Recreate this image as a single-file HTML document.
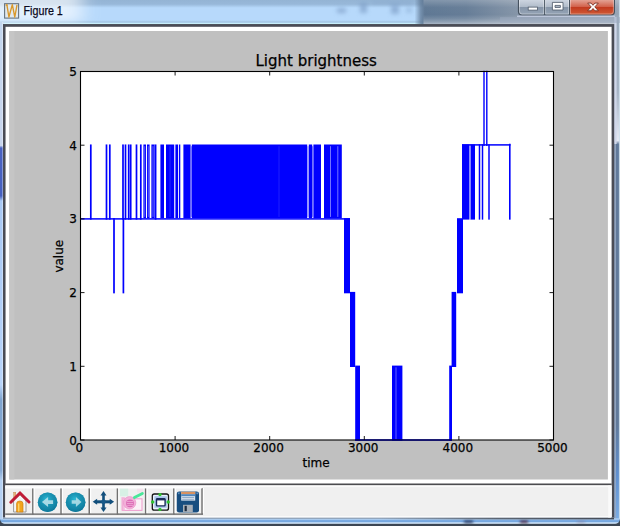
<!DOCTYPE html>
<html lang="en"><head><meta charset="utf-8"><title>Figure 1</title>
<style>
html,body{margin:0;padding:0;background:#b7d7fa;}
body{width:620px;height:526px;overflow:hidden;font-family:"Liberation Sans","DejaVu Sans",sans-serif;}
svg{display:block;}
</style></head><body>
<svg width="620" height="526" viewBox="0 0 620 526">

<defs>
 <linearGradient id="tbv" x1="0" y1="0" x2="0" y2="1">
  <stop offset="0" stop-color="#94b4d4"/><stop offset="0.17" stop-color="#98b8d9"/><stop offset="0.32" stop-color="#b7d9fb"/>
  <stop offset="0.83" stop-color="#b7d9fb"/><stop offset="0.865" stop-color="#a9cbe9"/><stop offset="0.915" stop-color="#a9cbe9"/><stop offset="0.945" stop-color="#c8f0fb"/><stop offset="1" stop-color="#c8eefb"/>
 </linearGradient>
 <linearGradient id="dkh" gradientUnits="userSpaceOnUse" x1="414.5" y1="0" x2="620" y2="0">
  <stop offset="0" stop-color="#5f7894" stop-opacity="0"/><stop offset="0.03" stop-color="#5f7894" stop-opacity="0.75"/>
  <stop offset="0.05" stop-color="#5f7894" stop-opacity="1"/><stop offset="0.25" stop-color="#667d97"/><stop offset="0.5" stop-color="#8595a8"/><stop offset="1" stop-color="#97a5b6"/>
 </linearGradient>
 <linearGradient id="dkv" x1="0" y1="0" x2="0" y2="1">
  <stop offset="0" stop-color="#ffffff" stop-opacity="0.22"/><stop offset="0.3" stop-color="#ffffff" stop-opacity="0.02"/>
  <stop offset="0.6" stop-color="#ffffff" stop-opacity="0.0"/><stop offset="0.75" stop-color="#ffffff" stop-opacity="0.12"/><stop offset="0.9" stop-color="#ffffff" stop-opacity="0.3"/><stop offset="1" stop-color="#ffffff" stop-opacity="0.5"/>
 </linearGradient>
 <linearGradient id="lb" x1="0" y1="0" x2="1" y2="0"><stop offset="0" stop-color="#7fa6d0"/><stop offset="0.4" stop-color="#b5d3f2"/><stop offset="1" stop-color="#d6e8fa"/></linearGradient>
 <linearGradient id="btn" x1="0" y1="0" x2="0" y2="1"><stop offset="0" stop-color="#cdd5e0"/><stop offset="0.45" stop-color="#b2bdcb"/><stop offset="0.5" stop-color="#8695a8"/><stop offset="1" stop-color="#95a4b6"/></linearGradient>
 <linearGradient id="cls" x1="0" y1="0" x2="0" y2="1"><stop offset="0" stop-color="#e3a193"/><stop offset="0.45" stop-color="#d2634d"/><stop offset="0.5" stop-color="#c23a1f"/><stop offset="1" stop-color="#cf5a36"/></linearGradient>
 <radialGradient id="glow" cx="0.5" cy="0.5" r="0.5"><stop offset="0" stop-color="#ffffff" stop-opacity="0.7"/><stop offset="0.6" stop-color="#ffffff" stop-opacity="0.4"/><stop offset="1" stop-color="#ffffff" stop-opacity="0"/></radialGradient>
 <linearGradient id="bdk" x1="0" y1="0" x2="1" y2="0"><stop offset="0" stop-color="#4e5560" stop-opacity="0"/><stop offset="0.5" stop-color="#4e5560" stop-opacity="0.8"/><stop offset="1" stop-color="#454b56"/></linearGradient>
 <filter id="bl3" x="-50%" y="-50%" width="200%" height="200%"><feGaussianBlur stdDeviation="2"/></filter>
 <filter id="bl8" x="-50%" y="-100%" width="200%" height="300%"><feGaussianBlur stdDeviation="9 4"/></filter>
 <filter id="bl1"><feGaussianBlur stdDeviation="1.6"/></filter>
 <filter id="bl2"><feGaussianBlur stdDeviation="0.5"/></filter>
</defs>
<!-- aero frame background -->
<rect x="0" y="0" width="620" height="526" fill="#b7d7fa"/>
<rect x="0" y="0" width="620" height="24.5" fill="url(#tbv)"/>
<!-- blurred blobs behind glass -->
<g filter="url(#bl3)" fill="#7696c0" opacity="0.6">
 <rect x="337" y="8" width="9" height="5"/><rect x="360" y="3" width="7" height="10"/><rect x="372" y="1" width="40" height="3" opacity="0.5"/>
 <rect x="391" y="5" width="8" height="9"/><rect x="406" y="7" width="6" height="6" opacity="0.6"/>
</g>
<!-- dark region on the right of titlebar -->
<rect x="414.5" y="0" width="205.5" height="24.5" fill="url(#dkh)"/>
<rect x="423.5" y="0" width="196.5" height="24.5" fill="url(#dkv)"/>
<!-- glow behind title text -->
<rect x="-30" y="-12" width="112" height="34" fill="#ffffff" opacity="0.62" filter="url(#bl8)"/>
<!-- left border -->
<defs>
 <linearGradient id="lbv" x1="0" y1="0" x2="0" y2="1">
  <stop offset="0" stop-color="#c3d6ee"/><stop offset="0.245" stop-color="#c9d6ee"/><stop offset="0.25" stop-color="#4a62c2"/><stop offset="0.345" stop-color="#4560c0"/>
  <stop offset="0.355" stop-color="#a8c8f4"/><stop offset="0.72" stop-color="#b8d4fa"/><stop offset="0.75" stop-color="#7fa4d0"/><stop offset="0.89" stop-color="#86a9d4"/><stop offset="0.91" stop-color="#b4d0f2"/><stop offset="1" stop-color="#b4d0f2"/>
 </linearGradient>
 <linearGradient id="rbv" x1="0" y1="0" x2="0" y2="1">
  <stop offset="0" stop-color="#9aaabb"/><stop offset="0.15" stop-color="#a6b4c6"/><stop offset="0.235" stop-color="#dfe4f0"/><stop offset="0.245" stop-color="#e4e9f4"/><stop offset="0.252" stop-color="#60799a"/>
  <stop offset="0.8" stop-color="#60799a"/><stop offset="0.9" stop-color="#5f8fcf"/><stop offset="1" stop-color="#7fb0e6"/>
 </linearGradient>
</defs>
<rect x="0" y="22" width="3.4" height="504" fill="url(#lbv)"/>
<rect x="2" y="22" width="1.2" height="504" fill="#ffffff" opacity="0.35"/>
<!-- right border -->
<rect x="614.1" y="15.5" width="5.9" height="510.5" fill="url(#rbv)"/>
<rect x="614.2" y="17" width="2.4" height="127" fill="#d0d7ea"/>
<rect x="614.2" y="144" width="1.8" height="376" fill="#98a9c2" opacity="0.85"/>
<rect x="618.9" y="0" width="1.1" height="526" fill="#cfe0ec" opacity="0.9"/>
<!-- bottom border -->
<rect x="0" y="518.4" width="620" height="6" fill="#b8d6f6"/>
<rect x="0" y="519.6" width="620" height="3" fill="#80b0e6"/>
<rect x="0" y="520.6" width="620" height="1.2" fill="#74a6de"/>
<rect x="0" y="522.5" width="620" height="1.4" fill="#d6e9fb"/>
<g filter="url(#bl1)" opacity="0.85"><rect x="464" y="520" width="9" height="3.4" fill="#26365f"/><rect x="520" y="520" width="8" height="3.4" fill="#4f2a45"/><rect x="577" y="520.6" width="8" height="2.6" fill="#8a7a98" opacity="0.6"/></g>
<rect x="0" y="523.8" width="620" height="2.2" fill="#3c4653"/>
<path d="M0 519 q0.5 5 6 5.2 v2 h-6 z" fill="#3c4653"/>
<path d="M620 519 q-0.5 5 -6 5.2 v2 h6 z" fill="#3c4653"/>
<!-- client: dark frame then white -->
<rect x="3" y="24.05" width="611.2" height="494" fill="#4a4c55"/>
<rect x="5.55" y="26.8" width="606.05" height="490.7" fill="#ffffff"/>
<rect x="3" y="517.4" width="611" height="2" fill="#b4cfee"/><rect x="3" y="517.5" width="611" height="1.2" fill="#8494a8"/>
<rect x="380" y="517.5" width="234" height="1.9" fill="url(#bdk)"/>
<!-- canvas gray -->
<rect x="9.3" y="31" width="598.6" height="448.5" fill="#c0c0c0"/>
<rect x="9.3" y="31" width="5" height="448.5" fill="#c5c5c5"/>
<!-- separator + toolbar -->
<rect x="5.2" y="483.5" width="606.4" height="2" fill="#4b4b4f"/>
<rect x="5.2" y="485.5" width="606.4" height="31" fill="#f0f0f0"/>
<rect x="5.2" y="485.5" width="606" height="1.6" fill="#fbfbfb"/>
<rect x="5.2" y="516" width="606" height="1.6" fill="#fafafa"/>
<rect x="608.2" y="485.5" width="3.4" height="32" fill="#fafafa"/>


<g>
 <rect x="4.6" y="3.7" width="14" height="14.4" fill="#e1e9ee" stroke="#66737f" stroke-width="1.1"/>
 <path d="M6.2 5.4 L6.9 4.8 L8.9 17 L12.3 4.6 L14.8 17 L17 4.8" fill="none" stroke="#d9982a" stroke-width="1.35" stroke-linejoin="round"/>
 <path d="M5.6 5.2 h2" stroke="#d9982a" stroke-width="1.6" opacity="0.7"/>
 <text x="23.6" y="15.2" font-family="'Liberation Sans', 'DejaVu Sans', sans-serif" font-size="12" fill="#0a0a1e" stroke="#0a0a1e" stroke-width="0.25" textLength="39.2" lengthAdjust="spacingAndGlyphs">Figure 1</text>
</g>
<g>
 <!-- caption buttons -->
 <path d="M517.9 0 V11.5 q0 4 4 4 H611 q4 0 4 -4 V0 z" fill="#46525f"/>
 <path d="M519 0 V11.3 q0 3.2 3.2 3.2 H544.1 V0 z" fill="url(#btn)"/>
 <path d="M545.1 0 V14.5 H569 V0 z" fill="url(#btn)"/>
 <path d="M570 0 V14.5 H610.8 q3.1 0 3.1 -3.2 V0 z" fill="url(#cls)"/>
 <path d="M519.5 0 V11.3 q0 2.7 2.7 2.7 H543.6 V0" fill="none" stroke="#ffffff" stroke-opacity="0.4" stroke-width="0.9"/>
 <path d="M545.6 0 V14 H568.5 V0" fill="none" stroke="#ffffff" stroke-opacity="0.4" stroke-width="0.9"/>
 <path d="M570.5 0 V14 H610.8 q2.6 0 2.6 -2.7 V0" fill="none" stroke="#ffffff" stroke-opacity="0.4" stroke-width="0.9"/>
 <rect x="528.2" y="7.1" width="9.2" height="3" fill="#ffffff" stroke="#4f5b6b" stroke-width="0.8"/>
 <path d="M552.4 2.4 h10.6 v7.6 h-10.6 z M555 5.4 v2 h5.4 v-2 z" fill="#ffffff" fill-rule="evenodd" stroke="#4a5564" stroke-width="0.8"/>
 <path d="M587.7 3.1 l3.4 0 l1.9 2.2 l1.9 -2.2 l3.4 0 l-3.5 3.8 l3.6 3.9 l-3.5 0 l-1.9 -2.3 l-1.9 2.3 l-3.5 0 l3.6 -3.9 z" fill="#ffffff" stroke="#7a3022" stroke-width="0.9" stroke-linejoin="round"/>
 <rect x="517" y="15.6" width="98" height="1.5" fill="#ccd4ea" opacity="0.75"/>
 <rect x="500" y="17.1" width="120" height="5.8" fill="#9aaac0" opacity="0.55"/>
</g>

<g>
<rect x="80.5" y="71.5" width="473.0" height="368.5" fill="#ffffff"/>
<rect x="89.95" y="144.45" width="1.70" height="75.20" fill="#0000ff" />
<rect x="105.65" y="144.45" width="1.70" height="75.20" fill="#0000ff" />
<rect x="108.95" y="144.45" width="1.70" height="75.20" fill="#0000ff" />
<rect x="122.15" y="144.45" width="1.70" height="75.20" fill="#0000ff" />
<rect x="124.65" y="144.45" width="1.70" height="75.20" fill="#0000ff" />
<rect x="127.85" y="144.45" width="1.70" height="75.20" fill="#0000ff" />
<rect x="129.85" y="144.45" width="1.70" height="75.20" fill="#0000ff" />
<rect x="135.65" y="144.45" width="1.70" height="75.20" fill="#0000ff" />
<rect x="139.95" y="144.45" width="1.70" height="75.20" fill="#0000ff" />
<rect x="154.75" y="144.45" width="1.70" height="75.20" fill="#0000ff" />
<rect x="143.40" y="144.50" width="2.60" height="73.70" fill="#0000ff" />
<rect x="147.00" y="144.50" width="2.60" height="73.70" fill="#0000ff" />
<rect x="151.40" y="144.50" width="3.20" height="73.70" fill="#0000ff" />
<rect x="160.40" y="144.50" width="3.60" height="73.70" fill="#0000ff" />
<rect x="166.00" y="144.50" width="8.20" height="73.70" fill="#0000ff" />
<rect x="175.40" y="144.50" width="2.60" height="73.70" fill="#0000ff" />
<rect x="178.90" y="144.50" width="1.40" height="73.70" fill="#0000ff" />
<rect x="183.40" y="144.50" width="7.20" height="73.70" fill="#0000ff" />
<rect x="191.80" y="144.50" width="115.40" height="73.70" fill="#0000ff" />
<rect x="308.80" y="144.50" width="3.40" height="73.70" fill="#0000ff" />
<rect x="313.40" y="144.50" width="7.60" height="73.70" fill="#0000ff" />
<rect x="324.00" y="144.50" width="17.80" height="73.70" fill="#0000ff" />
<rect x="144.20" y="146.20" width="1.00" height="70.70" fill="#ffffff" opacity="0.35"/>
<rect x="147.80" y="146.20" width="1.00" height="70.70" fill="#ffffff" opacity="0.35"/>
<rect x="152.50" y="146.20" width="1.00" height="70.70" fill="#ffffff" opacity="0.4"/>
<rect x="169.50" y="146.20" width="1.00" height="70.70" fill="#ffffff" opacity="0.15"/>
<rect x="278.50" y="146.20" width="1.00" height="70.70" fill="#ffffff" opacity="0.12"/>
<rect x="330.00" y="146.20" width="1.00" height="70.70" fill="#ffffff" opacity="0.45"/>
<rect x="337.30" y="146.20" width="1.00" height="70.70" fill="#ffffff" opacity="0.45"/>
<rect x="307.20" y="146.20" width="1.60" height="70.70" fill="#8c8cff" />
<rect x="312.20" y="146.20" width="1.20" height="70.70" fill="#5a5aff" />
<rect x="191.00" y="146.20" width="0.80" height="70.70" fill="#5a5aff" />
<rect x="113.15" y="218.15" width="1.70" height="75.20" fill="#0000ff" />
<rect x="122.55" y="218.15" width="1.70" height="75.20" fill="#0000ff" />
<rect x="80.50" y="218.15" width="269.50" height="1.50" fill="#0000ff" />
<rect x="344.00" y="218.20" width="6.00" height="75.10" fill="#0000ff" />
<rect x="350.00" y="291.90" width="5.20" height="75.10" fill="#0000ff" />
<rect x="355.20" y="365.60" width="4.80" height="75.10" fill="#0000ff" />
<rect x="355.00" y="439.25" width="97.00" height="1.50" fill="#0000ff" />
<rect x="392.00" y="365.60" width="10.40" height="75.10" fill="#0000ff" />
<rect x="395.60" y="367.30" width="0.80" height="71.70" fill="#7a7aff" />
<rect x="449.20" y="365.60" width="2.80" height="75.10" fill="#0000ff" />
<rect x="451.60" y="291.90" width="4.60" height="75.10" fill="#0000ff" />
<rect x="457.00" y="218.20" width="6.00" height="75.10" fill="#0000ff" />
<rect x="462.00" y="144.50" width="7.00" height="75.10" fill="#0000ff" />
<rect x="470.50" y="144.50" width="4.50" height="75.10" fill="#0000ff" />
<rect x="469.00" y="144.50" width="1.50" height="75.10" fill="#8c8cff" />
<rect x="478.75" y="144.45" width="1.50" height="75.20" fill="#0000ff" />
<rect x="481.75" y="144.45" width="1.50" height="75.20" fill="#0000ff" />
<rect x="488.25" y="144.45" width="1.50" height="75.20" fill="#0000ff" />
<rect x="483.30" y="70.75" width="1.40" height="75.20" fill="#0000ff" />
<rect x="486.10" y="70.75" width="1.40" height="75.20" fill="#0000ff" />
<rect x="462.00" y="144.15" width="48.50" height="1.50" fill="#0000ff" />
<rect x="509.00" y="143.75" width="1.60" height="75.90" fill="#0000ff" />
<g stroke="#000" stroke-width="0.9" fill="none"><path d="M80.50 440.0 v-4 M80.50 71.5 v4" /><path d="M80.5 440.00 h4 M553.5 440.00 h-4" /><path d="M175.10 440.0 v-4 M175.10 71.5 v4" /><path d="M80.5 366.30 h4 M553.5 366.30 h-4" /><path d="M269.70 440.0 v-4 M269.70 71.5 v4" /><path d="M80.5 292.60 h4 M553.5 292.60 h-4" /><path d="M364.30 440.0 v-4 M364.30 71.5 v4" /><path d="M80.5 218.90 h4 M553.5 218.90 h-4" /><path d="M458.90 440.0 v-4 M458.90 71.5 v4" /><path d="M80.5 145.20 h4 M553.5 145.20 h-4" /><path d="M553.50 440.0 v-4 M553.50 71.5 v4" /><path d="M80.5 71.50 h4 M553.5 71.50 h-4" /></g>
<rect x="80.5" y="71.5" width="473.0" height="368.5" fill="none" stroke="#000" stroke-width="1.1"/>
<g font-family="'DejaVu Sans', 'Liberation Sans', sans-serif" font-size="12" fill="#000" stroke="#000" stroke-width="0.25"><text x="79.40" y="451.8" text-anchor="middle">0</text><text x="77" y="444.50" text-anchor="end">0</text><text x="174.00" y="451.8" text-anchor="middle">1000</text><text x="77" y="370.80" text-anchor="end">1</text><text x="268.60" y="451.8" text-anchor="middle">2000</text><text x="77" y="297.10" text-anchor="end">2</text><text x="363.20" y="451.8" text-anchor="middle">3000</text><text x="77" y="223.40" text-anchor="end">3</text><text x="457.80" y="451.8" text-anchor="middle">4000</text><text x="77" y="149.70" text-anchor="end">4</text><text x="552.40" y="451.8" text-anchor="middle">5000</text><text x="77" y="76.00" text-anchor="end">5</text><text x="316" y="466.6" text-anchor="middle">time</text><text transform="translate(63.3 256.2) rotate(-90)" text-anchor="middle">value</text><text x="316.2" y="66.3" text-anchor="middle" font-size="15">Light brightness</text></g>
</g>
<g>
<rect x="32.10" y="488" width="1.6" height="26.8" fill="#707070"/>
<rect x="33.60" y="488" width="1.2" height="25.4" fill="#ffffff"/>
<rect x="60.30" y="488" width="1.6" height="26.8" fill="#707070"/>
<rect x="61.80" y="488" width="1.2" height="25.4" fill="#ffffff"/>
<rect x="88.50" y="488" width="1.6" height="26.8" fill="#707070"/>
<rect x="90.00" y="488" width="1.2" height="25.4" fill="#ffffff"/>
<rect x="116.70" y="488" width="1.6" height="26.8" fill="#707070"/>
<rect x="118.20" y="488" width="1.2" height="25.4" fill="#ffffff"/>
<rect x="144.90" y="488" width="1.6" height="26.8" fill="#707070"/>
<rect x="146.40" y="488" width="1.2" height="25.4" fill="#ffffff"/>
<rect x="173.10" y="488" width="1.6" height="26.8" fill="#707070"/>
<rect x="174.60" y="488" width="1.2" height="25.4" fill="#ffffff"/>
<rect x="201.30" y="488" width="1.6" height="26.8" fill="#707070"/>
<rect x="202.80" y="488" width="1.2" height="25.4" fill="#ffffff"/>
<rect x="5.2" y="513.4" width="197.6" height="1.5" fill="#777777"/>
<rect x="5.2" y="487.2" width="197" height="1.2" fill="#ffffff"/>

<g>
 <rect x="13.6" y="492.2" width="2.2" height="6.5" fill="#e7b27a" stroke="#b98a5a" stroke-width="0.4"/>
 <path d="M13.6 500.5 L20 494.6 L26 500.5 V512 H13.6 z" fill="#f4f4f4" stroke="#9a9a9a" stroke-width="1"/>
 <path d="M16.6 512 V503.6 q0 -2.6 3.2 -2.6 q3.2 0 3.2 2.6 V512 z" fill="#f2a51d" stroke="#d07f10" stroke-width="0.7"/>
 <rect x="18" y="503.5" width="1.4" height="8" fill="#fbd46a"/>
 <path d="M10.8 502.2 L20 493 L29 502" fill="none" stroke="#c01c36" stroke-width="3" stroke-linecap="round" stroke-linejoin="miter"/>
</g>
<defs><radialGradient id="cg" cx="0.45" cy="0.35" r="0.7"><stop offset="0" stop-color="#2cbcd8" stop-opacity="0.95"/><stop offset="0.55" stop-color="#1a94b4" stop-opacity="0.5"/><stop offset="1" stop-color="#0a6c90" stop-opacity="0.95"/></radialGradient></defs>
<circle cx="47.6" cy="502.3" r="9.8" fill="#1486a6"/><circle cx="47.6" cy="502.3" r="9.8" fill="url(#cg)"/><path d="M41.9 502.1 l6.2 -5 v3.1 h5 v3.8 h-5 v3.1 z" fill="#bfe4ec" opacity="0.85"/>
<circle cx="75.6" cy="502.2" r="9.8" fill="#1486a6"/><circle cx="75.6" cy="502.2" r="9.8" fill="url(#cg)"/><path d="M81.5 502.0 l-5.6 -5 v3.2 h-4.2 v3.6 h4.2 v3.2 z" fill="#bfe4ec" opacity="0.82"/>

<g fill="#124f7c" stroke="none">
 <rect x="102.2" y="494" width="2.6" height="15.5"/><rect x="95.5" y="500.3" width="16" height="3"/>
 <path d="M103.5 491 l3 4.4 h-6 z"/><path d="M103.5 512 l3 -4.4 h-6 z"/>
 <path d="M92.7 501.8 l4.4 -3 v6 z"/><path d="M114.1 501.8 l-4.4 -3 v6 z"/>
 <circle cx="103.5" cy="501.8" r="2.3" fill="#17598a"/>
</g>

<g filter="url(#bl2)">
 <rect x="119.8" y="488.6" width="8.4" height="7.6" fill="#aef0d6" opacity="0.38"/>
 <rect x="137" y="488.6" width="6" height="4" fill="#f6d6ea" opacity="0.5"/>
 <rect x="122.4" y="498.8" width="19.6" height="11.6" fill="#fbf1f7" stroke="#f0a2d0" stroke-width="1.1"/>
 <rect x="121.4" y="497" width="3.4" height="13.6" fill="#f3b2da" opacity="0.8"/>
 <circle cx="129.6" cy="502.8" r="6.2" fill="#f2b0d9" stroke="#ee9ccd" stroke-width="0.8"/>
 <circle cx="130" cy="503.3" r="3.9" fill="#dc68b4"/>
 <path d="M127 501.4 h6 M126.8 503.4 h6.4 M127.2 505.3 h5.8" stroke="#f4c4e2" stroke-width="0.7"/>
 <path d="M134.4 497.6 L142.4 493.4" stroke="#4ae79a" stroke-width="2.8" stroke-linecap="round"/>
</g>

<g>
 <rect x="152.3" y="494" width="16.2" height="16.2" rx="2" fill="#e9f0fa" stroke="#151515" stroke-width="1.3"/>
 <rect x="154.4" y="496.2" width="12.4" height="11.6" fill="#a9c5ea"/>
 <rect x="156.5" y="498.7" width="8.6" height="7.2" rx="0.8" fill="#ffffff" stroke="#1b2c5a" stroke-width="1.4"/>
 <rect x="156.5" y="498.4" width="8.6" height="2" fill="#1b2c5a"/>
 <circle cx="160" cy="494.6" r="1.7" fill="#2fc42f"/><circle cx="160" cy="509.4" r="1.7" fill="#2fc42f"/>
 <circle cx="152.7" cy="502" r="1.7" fill="#2fc42f"/><circle cx="168.2" cy="502" r="1.7" fill="#2fc42f"/>
</g>

<g>
 <rect x="176.8" y="491.4" width="22.2" height="21.2" rx="2.4" fill="#174d7f"/>
 <rect x="177.6" y="492.2" width="20.6" height="1" fill="#3b6f9d" opacity="0.6"/>
 <rect x="181.2" y="491.8" width="14" height="8.8" fill="#dfe8f2"/>
 <rect x="181.2" y="491.8" width="14" height="2.4" fill="#d8915e"/>
 <rect x="181.2" y="494.2" width="14" height="2" fill="#4f86bc"/>
 <rect x="182.2" y="497" width="12" height="0.9" fill="#8aa5c2"/><rect x="182.2" y="498.8" width="12" height="0.9" fill="#8aa5c2"/>
 <rect x="183" y="504.8" width="9.8" height="7.4" fill="#a7afb8"/>
 <rect x="184.6" y="505.8" width="2.2" height="5.4" fill="#1d2c40"/>
 <rect x="178" y="492.6" width="1.6" height="1.6" fill="#5f8fbd"/><rect x="196.4" y="492.6" width="1.6" height="1.6" fill="#5f8fbd"/>
</g>
</g>
</svg>
</body></html>
